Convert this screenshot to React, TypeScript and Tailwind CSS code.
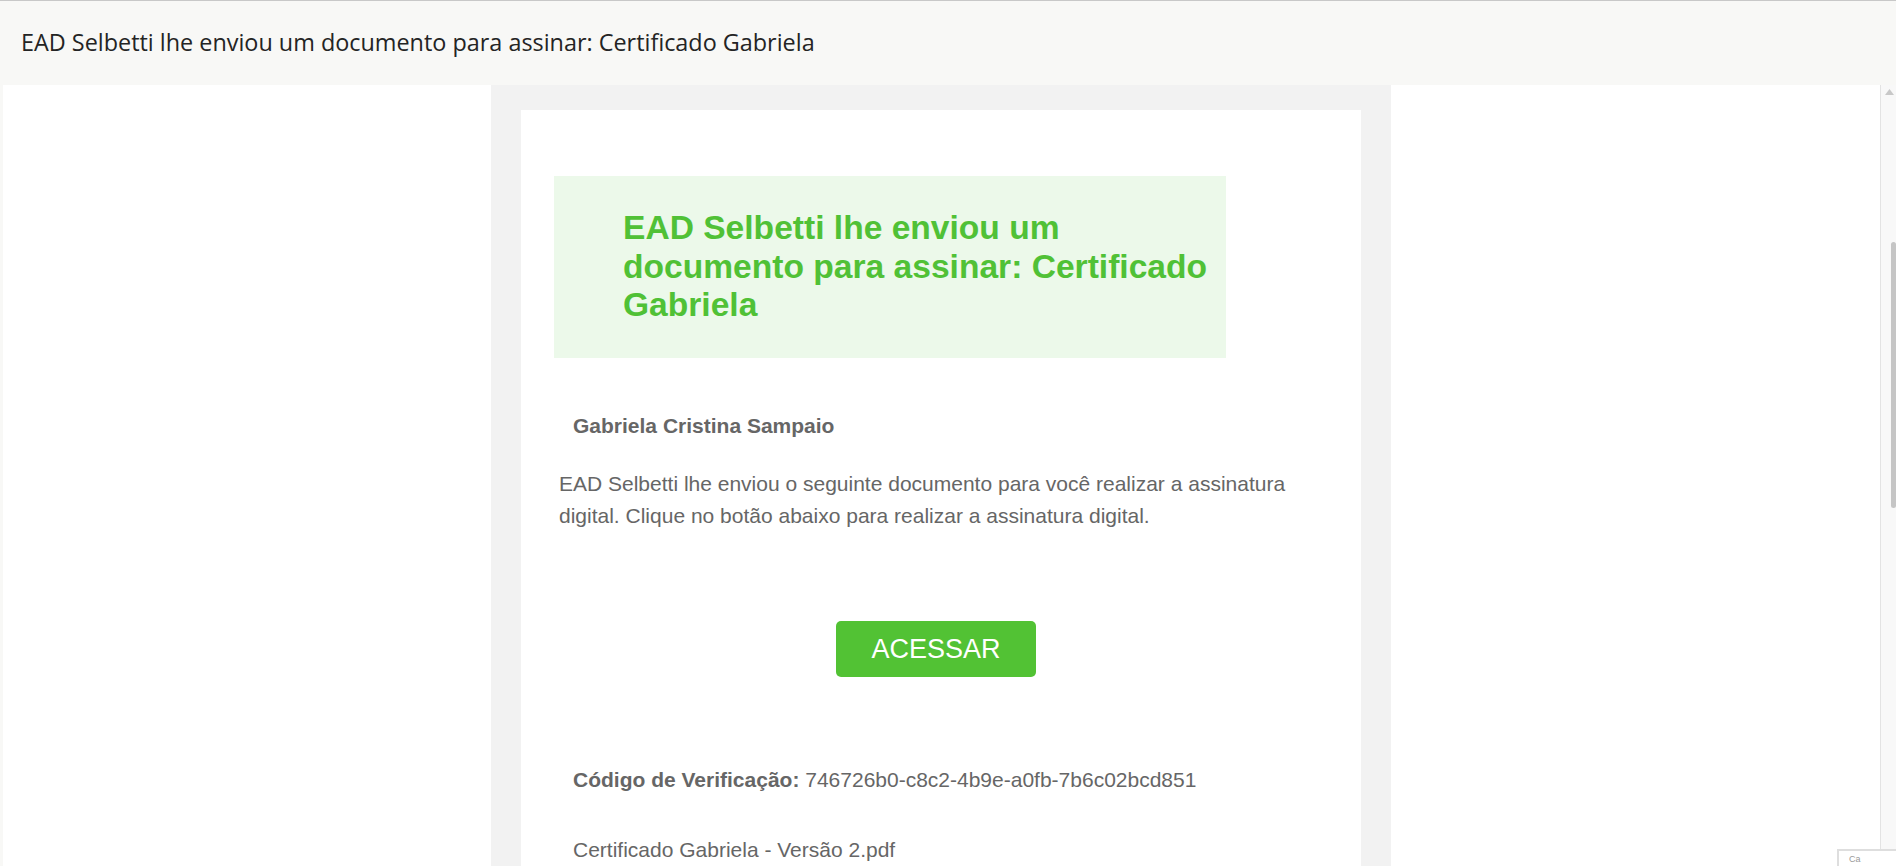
import React from "react";

export default function App() {
  return (
    <div className="relative w-[1896px] h-[866px] overflow-hidden flex flex-col bg-[#f8f8f6] border-t border-[#c8c8c8]">
      {/* Header */}
      <div className="h-[84px] shrink-0 flex items-center pl-[21px] pb-[1px] font-['Open_Sans',sans-serif] text-[23.4px] text-[#242424]">
        EAD Selbetti lhe enviou um documento para assinar: Certificado Gabriela
      </div>

      {/* Body */}
      <div className="flex flex-1 min-h-0">
        <div className="ml-[3px] w-[1878px] h-full bg-white border-r border-[#e3e3e3] overflow-hidden">
          <div className="ml-[488px] w-[900px] h-full bg-[#f2f2f2] px-[30px] pt-[25px]">
            <div className="bg-white h-full pt-[66px] font-['Liberation_Sans',Arial,sans-serif] text-[#666666]">
              {/* Green banner */}
              <div className="ml-[33px] w-[672px] h-[182px] bg-[#ecf9ea] pt-[33px] pl-[69px] pr-[10px]">
                <h1 className="text-[33.6px] leading-[38.6px] font-bold text-[#50c136]">
                  EAD Selbetti lhe enviou um documento para assinar: Certificado Gabriela
                </h1>
              </div>

              {/* Name */}
              <div className="mt-[56px] pl-[52px] text-[21px] leading-[24px] font-bold">
                Gabriela Cristina Sampaio
              </div>

              {/* Text */}
              <div className="ml-[38px] w-[754px]">
                <p className="mt-[30px] text-[21px] leading-[32px]">
                  EAD Selbetti lhe enviou o seguinte documento para você realizar a assinatura
                  digital. Clique no botão abaixo para realizar a assinatura digital.
                </p>
                <div className="mt-[89px] flex justify-center">
                  <button className="w-[200px] h-[56px] rounded-[5px] bg-[#52c234] text-white text-[27px] leading-[56px] font-['Liberation_Sans',Arial,sans-serif]">
                    ACESSAR
                  </button>
                </div>
              </div>

              {/* Code */}
              <div className="mt-[91px] pl-[52px] text-[21px] leading-[24px]">
                <span className="font-bold">Código de Verificação:</span>{" "}
                746726b0-c8c2-4b9e-a0fb-7b6c02bcd851
              </div>

              <div className="mt-[46px] pl-[52px] text-[21px] leading-[24px]">
                Certificado Gabriela - Versão 2.pdf
              </div>
            </div>
          </div>
        </div>

        {/* Scrollbar */}
        <div className="w-[15px] h-full bg-[#f8f8f8] flex flex-col items-end">
          <svg width="9" height="6" viewBox="0 0 9 6" className="mt-[4px] mr-[2px]">
            <polygon points="4.5,0 9,6 0,6" fill="#c8c8c8" />
          </svg>
          <div className="mt-[147px] w-[5px] h-[266px] rounded-[3px] bg-[#c5c5c5]" />
        </div>
      </div>

      {/* Floating badge at bottom right */}
      <div className="absolute left-[1837px] top-[848px] w-[70px] h-[40px] bg-white border-2 border-[#dedede] flex pl-[10px] pt-[3px]">
        <span className="text-[9px] leading-[10px] text-[#9a9a9a] font-['Liberation_Sans',Arial,sans-serif]">Ca</span>
      </div>
    </div>
  );
}
